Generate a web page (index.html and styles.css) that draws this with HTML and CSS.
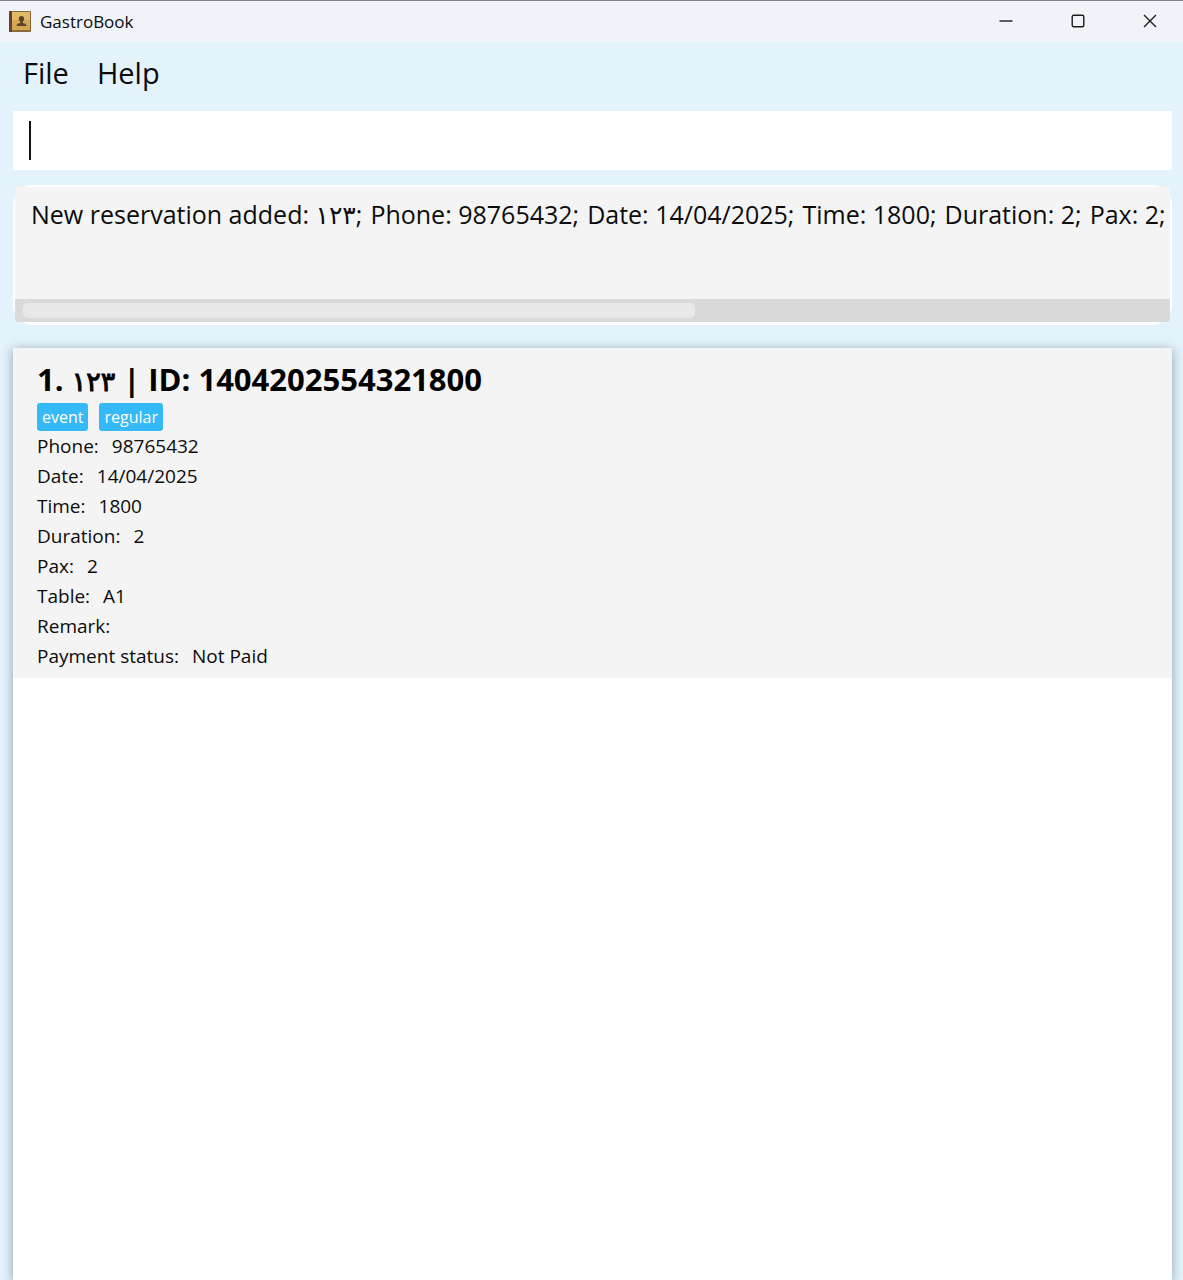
FILE: index.html
```html
<!DOCTYPE html>
<html lang="en">
<head>
<meta charset="utf-8">
<meta name="viewport" content="width=device-width, initial-scale=1">
<title>GastroBook</title>
<link rel="stylesheet" href="styles.css">
</head>
<body>
<div class="window">
  <header class="titlebar">
    <svg class="app-icon" viewBox="0 0 24 24" aria-hidden="true">
      <rect x="1" y="1" width="22" height="21" rx="1" fill="#8a6a3c"/>
      <rect x="1" y="1" width="3" height="21" rx="1" fill="#5e4232"/>
      <rect x="4" y="2" width="18" height="18" fill="#d6a650"/>
      <rect x="4" y="2" width="18" height="8" fill="#e2b869"/>
      <path d="M13.500 6c1.700 0 2.700 1.200 2.700 2.800 0 1.400-.8 2.200-1.400 2.800v1.300c1.500.5 3.700.7 3.700 3.100h-10c0-2.400 2.200-2.600 3.700-3.100v-1.300c-.6-.6-1.400-1.400-1.400-2.800C10.800 7.200 11.800 6 13.500 6z" fill="#5a4329"/>
    </svg>
    <h1 class="app-name">GastroBook</h1>
    <div class="window-controls">
      <button class="window-button" type="button" aria-label="Minimize">
        <svg viewBox="0 0 14 14"><path d="M.5 7h13"/></svg>
      </button>
      <button class="window-button" type="button" aria-label="Maximize">
        <svg viewBox="0 0 14 14"><rect x="1.200" y="1.200" width="11.600" height="11.600" rx="1.500"/></svg>
      </button>
      <button class="window-button close" type="button" aria-label="Close">
        <svg viewBox="0 0 14 14"><path d="M1 1l12 12M13 1L1 13"/></svg>
      </button>
    </div>
  </header>

  <nav class="menubar" aria-label="Main menu">
    <button class="menu-button" type="button">File</button>
    <button class="menu-button" type="button">Help</button>
  </nav>

  <main class="content">
    <div class="command-box">
      <input class="command-input" type="text" aria-label="Command">
      <span class="caret"></span>
    </div>

    <section class="result" aria-label="Result">
      <div class="result-view">
        <p class="result-text">
          <span>New reservation added: ١٢٣;</span>
          <span>Phone: 98765432;</span>
          <span>Date: 14/04/2025;</span>
          <span>Time: 1800;</span>
          <span>Duration: 2;</span>
          <span>Pax: 2;</span>
        </p>
        <div class="scroll-track"><div class="scroll-thumb"></div></div>
      </div>
    </section>

    <section class="reservations" aria-label="Reservations">
      <article class="card">
        <h2 class="card-title">1. <span class="customer">١٢٣</span> | ID: 1404202554321800</h2>
        <div class="tags">
          <span class="tag">event</span>
          <span class="tag">regular</span>
        </div>
        <dl class="details">
          <div class="detail"><dt>Phone:</dt><dd>98765432</dd></div>
          <div class="detail"><dt>Date:</dt><dd>14/04/2025</dd></div>
          <div class="detail"><dt>Time:</dt><dd>1800</dd></div>
          <div class="detail"><dt>Duration:</dt><dd>2</dd></div>
          <div class="detail"><dt>Pax:</dt><dd>2</dd></div>
          <div class="detail"><dt>Table:</dt><dd>A1</dd></div>
          <div class="detail"><dt>Remark:</dt><dd></dd></div>
          <div class="detail"><dt>Payment status:</dt><dd>Not Paid</dd></div>
        </dl>
      </article>
    </section>
  </main>
</div>
</body>
</html>
```
FILE: styles.css
```css
* {
  box-sizing: border-box;
}

body {
  margin: 0;
  background: #e3f2fb;
  color: #0c0c0c;
  font-family: "Open Sans", "Noto Sans", "DejaVu Sans", sans-serif;
}

h1, h2, p, dl, dd {
  margin: 0;
}

button {
  padding: 0;
  border: 0;
  background: none;
  color: inherit;
  font: inherit;
}

.window {
  display: flex;
  flex-direction: column;
  min-height: 100vh;
  overflow: hidden;
}

.titlebar {
  display: flex;
  align-items: center;
  gap: 8px;
  height: 42px;
  padding-left: 8px;
  border-top: 1px solid #85838a;
  background: #f0f4f8;
}

.app-icon {
  width: 24px;
  height: 24px;
}

.app-name {
  font-size: 17px;
  font-weight: 400;
  line-height: 24px;
}

.window-controls {
  display: flex;
  align-self: flex-start;
  margin-left: auto;
}

.window-button {
  display: flex;
  align-items: center;
  justify-content: center;
  width: 72px;
  height: 40px;
}

.window-button.close {
  justify-content: flex-start;
  width: 69px;
  padding-left: 29px;
}

.window-button svg {
  width: 14px;
  height: 14px;
  fill: none;
  stroke: #1b1b1b;
  stroke-width: 1.4;
}

.menubar {
  display: flex;
  gap: 28px;
  padding: 10px 23px 17px;
}

.menu-button {
  font-size: 29px;
  line-height: 42px;
}

.content {
  display: flex;
  flex: 1;
  flex-direction: column;
  padding: 0 11px 0 13px;
}

.command-box {
  position: relative;
}

.command-input {
  display: block;
  width: 100%;
  height: 59px;
  padding: 0 16px;
  border: 0;
  outline: 0;
  background: #fff;
  font: inherit;
  font-size: 25px;
}

.caret {
  position: absolute;
  top: 10px;
  left: 16px;
  width: 2px;
  height: 39px;
  background: #111;
}

.result {
  margin: 15px 0 23px;
  padding: 2px 2px 3px;
  border-radius: 20px;
  background: #fff;
}

.result-view {
  overflow: hidden;
  border-radius: 3px;
  background: #f4f4f4;
}

.result-text {
  display: flex;
  gap: 8px;
  height: 112px;
  padding: 9px 0 0 16px;
  font-size: 25px;
  line-height: 36px;
  white-space: nowrap;
}

.scroll-track {
  padding: 4px 8px;
  background: #dadada;
}

.scroll-thumb {
  width: 59%;
  height: 15px;
  border-radius: 5px;
  background: #e8e8e8;
}

.reservations {
  flex: 1;
  background: #fff;
  box-shadow: 0 2px 10px rgba(60, 80, 95, 0.5);
}

.card {
  padding: 9px 24px 7px;
  background: #f4f4f4;
}

.card-title {
  color: #000;
  font-size: 31px;
  font-weight: 700;
  line-height: 44px;
}

.customer {
  font-size: 27px;
  font-weight: 400;
  line-height: 1;
  -webkit-text-stroke: 1px #000;
}

.tags {
  display: flex;
  gap: 11px;
  padding-top: 2px;
}

.tag {
  padding: 0 5px;
  border-radius: 3px;
  background: #36b9f7;
  color: #fff;
  font-size: 16px;
  line-height: 28px;
}

.detail {
  display: flex;
  gap: 13px;
  font-size: 19px;
  line-height: 30px;
}
```
